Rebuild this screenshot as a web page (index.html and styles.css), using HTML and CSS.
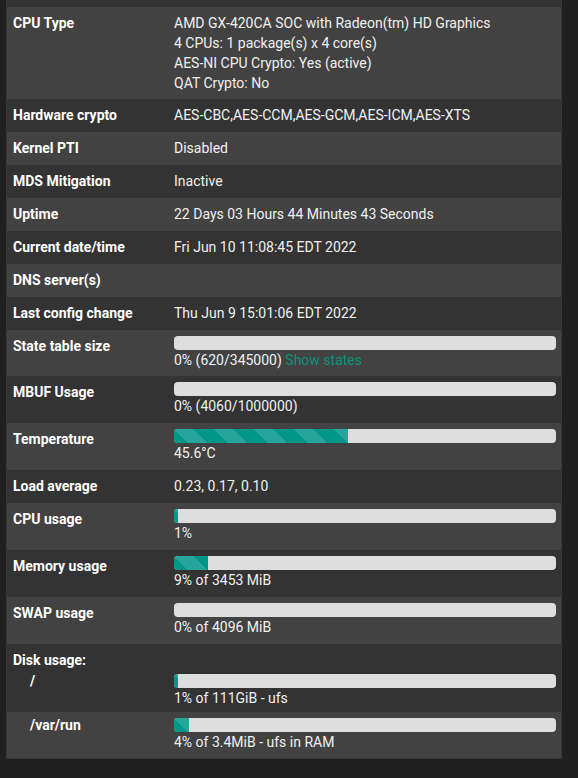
FILE: index.html
```html
<!DOCTYPE html>
<html lang="en">
<head>
    <meta charset="UTF-8">
    <meta name="viewport" content="width=device-width, initial-scale=1.0">
    <title>System Information</title>
    <link rel="stylesheet" href="styles.css">
</head>
<body>

    <div class="panel">
        <table class="sysinfo">
            <tbody>
                <!-- tail of the row above, scrolled out of view -->
                <tr class="cut"><td colspan="2"></td></tr>

                <tr class="light tight">
                    <th>CPU Type</th>
                    <td>AMD GX-420CA SOC with Radeon(tm) HD Graphics<br>
                        4 CPUs: 1 package(s) x 4 core(s)<br>
                        AES-NI CPU Crypto: Yes (active)<br>
                        QAT Crypto: No</td>
                </tr>
                <tr>
                    <th>Hardware crypto</th>
                    <td>AES-CBC,AES-CCM,AES-GCM,AES-ICM,AES-XTS</td>
                </tr>
                <tr class="light">
                    <th>Kernel PTI</th>
                    <td>Disabled</td>
                </tr>
                <tr>
                    <th>MDS Mitigation</th>
                    <td>Inactive</td>
                </tr>
                <tr class="light">
                    <th>Uptime</th>
                    <td>22 Days 03 Hours 44 Minutes 43 Seconds</td>
                </tr>
                <tr>
                    <th>Current date/time</th>
                    <td>Fri Jun 10 11:08:45 EDT 2022</td>
                </tr>
                <tr class="light">
                    <th>DNS server(s)</th>
                    <td></td>
                </tr>
                <tr>
                    <th>Last config change</th>
                    <td>Thu Jun 9 15:01:06 EDT 2022</td>
                </tr>
                <tr class="light tight">
                    <th>State table size</th>
                    <td>
                        <div class="progress"><div class="progress-bar" style="width: 0%"></div></div>
                        0% (620/345000) <a href="#">Show states</a>
                    </td>
                </tr>
                <tr>
                    <th>MBUF Usage</th>
                    <td>
                        <div class="progress"><div class="progress-bar" style="width: 0%"></div></div>
                        0% (4060/1000000)
                    </td>
                </tr>
                <tr class="light">
                    <th>Temperature</th>
                    <td>
                        <div class="progress"><div class="progress-bar" style="width: 45.6%"></div></div>
                        45.6&deg;C
                    </td>
                </tr>
                <tr>
                    <th>Load average</th>
                    <td>0.23, 0.17, 0.10</td>
                </tr>
                <tr class="light">
                    <th>CPU usage</th>
                    <td>
                        <div class="progress"><div class="progress-bar" style="width: 1%"></div></div>
                        1%
                    </td>
                </tr>
                <tr>
                    <th>Memory usage</th>
                    <td>
                        <div class="progress"><div class="progress-bar" style="width: 9%"></div></div>
                        9% of 3453 MiB
                    </td>
                </tr>
                <tr class="light">
                    <th>SWAP usage</th>
                    <td>
                        <div class="progress"><div class="progress-bar" style="width: 0%"></div></div>
                        0% of 4096 MiB
                    </td>
                </tr>

                <!-- disk usage: heading plus one row per mount point -->
                <tr class="disk-head">
                    <th colspan="2">Disk usage:</th>
                </tr>
                <tr class="disk first">
                    <th>/</th>
                    <td>
                        <div class="progress"><div class="progress-bar" style="width: 1%"></div></div>
                        1% of 111GiB - ufs
                    </td>
                </tr>
                <tr class="light disk tight">
                    <th>/var/run</th>
                    <td>
                        <div class="progress"><div class="progress-bar" style="width: 4%"></div></div>
                        4% of 3.4MiB - ufs in RAM
                    </td>
                </tr>
            </tbody>
        </table>
    </div>

</body>
</html>
```

FILE: styles.css
```css
/* --- dark dashboard widget --- */
* {
    box-sizing: border-box;
    margin: 0;
    padding: 0;
}

body {
    background-color: #1f1f1f;
    color: #f0f0f0;
    font-family: Roboto, 'Liberation Sans', sans-serif;
    font-size: 14px;
    line-height: 20px;
    padding-bottom: 20px;
}

.panel {
    margin: 0 16px 0 6px;
    border: 1px solid #383838;
    border-top: none;
}

.sysinfo {
    width: 100%;
    border-collapse: collapse;
}

.sysinfo tr {
    background-color: #333333;
}

.sysinfo tr.light {
    background-color: #424242;
}

.sysinfo th,
.sysinfo td {
    padding: 6px 5px 7px 0;
    vertical-align: top;
    text-align: left;
}

.sysinfo tr.tight th,
.sysinfo tr.tight td {
    padding-bottom: 6px;
}

.sysinfo th {
    width: 167px;
    padding-left: 6px;
    color: #ffffff;
    font-weight: bold;
}

.sysinfo tr.cut td {
    height: 7px;
    padding: 0;
}

.sysinfo a {
    color: #0a917f;
    text-decoration: none;
}

/* progress bars */
.progress {
    height: 14px;
    background-color: #dedede;
    border-radius: 4px;
    overflow: hidden;
}

.progress-bar {
    height: 100%;
    background-color: #009688;
    background-image: linear-gradient(45deg,
        rgba(255,255,255,0.15) 25%, transparent 25%,
        transparent 50%, rgba(255,255,255,0.15) 50%,
        rgba(255,255,255,0.15) 75%, transparent 75%, transparent);
    background-size: 40px 40px;
}

/* disk usage block */
.sysinfo tr.disk-head th {
    padding-bottom: 0;
}

.sysinfo tr.disk th {
    padding-left: 23px;
    line-height: 14px;
}

.sysinfo tr.disk.first th,
.sysinfo tr.disk.first td {
    padding-top: 4px;
    padding-bottom: 4px;
}
```
